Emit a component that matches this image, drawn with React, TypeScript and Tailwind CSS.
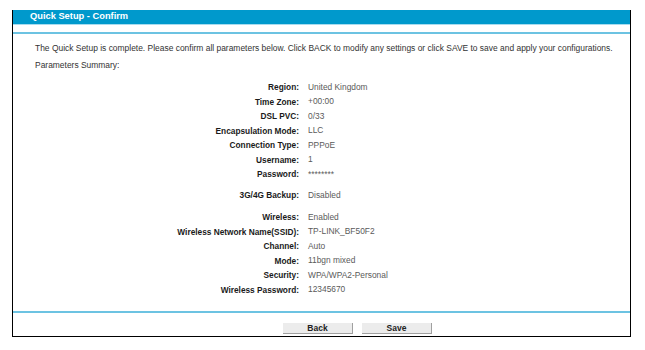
const rows1: [string, string][] = [
  ["Region:", "United Kingdom"],
  ["Time Zone:", "+00:00"],
  ["DSL PVC:", "0/33"],
  ["Encapsulation Mode:", "LLC"],
  ["Connection Type:", "PPPoE"],
  ["Username:", "1"],
  ["Password:", "********"],
];

const rows2: [string, string][] = [
  ["Wireless:", "Enabled"],
  ["Wireless Network Name(SSID):", "TP-LINK_BF50F2"],
  ["Channel:", "Auto"],
  ["Mode:", "11bgn mixed"],
  ["Security:", "WPA/WPA2-Personal"],
  ["Wireless Password:", "12345670"],
];

function Row({ label, value }: { label: string; value: string }) {
  return (
    <div className="flex h-[14.5px] items-center">
      <div className="w-[264px] text-right text-[8.3px] font-bold text-[#1a1a1a]">{label}</div>
      <div className="pl-[9px] text-[8.4px] text-[#5a5a5a]">{value}</div>
    </div>
  );
}

export default function App() {
  return (
    <div className="h-[350px] w-[645px] bg-white pl-[12px] pt-[10px] font-['Liberation_Sans',Arial,sans-serif]">
      <div className="flex h-[327px] w-[619px] flex-col border-x border-b border-black">
        {/* header */}
        <div className="flex h-[14px] items-center bg-[#0099cc] pl-[17px] text-[9.3px] font-bold text-white">
          Quick Setup - Confirm
        </div>
        <div className="h-[1px] bg-[#a8dcef]" />
        <div className="h-[7px]" />
        <div className="h-[2px] bg-[#6cc3e2]" />

        {/* body */}
        <div className="flex h-[277px] flex-col pl-[22px] text-[8.45px] text-[#333]">
          <div className="mt-[8px] h-[12px] whitespace-nowrap leading-[12px]">
            The Quick Setup is complete. Please confirm all parameters below. Click BACK to modify any settings or click SAVE to save and apply your configurations.
          </div>
          <div className="mt-[5px] h-[12px] leading-[12px]">Parameters Summary:</div>
          <div className="mt-[9px] flex flex-col">
            {rows1.map(([l, v]) => (
              <Row key={l} label={l} value={v} />
            ))}
          </div>
          <div className="mt-[6.5px]">
            <Row label="3G/4G Backup:" value="Disabled" />
          </div>
          <div className="mt-[7.5px] flex flex-col">
            {rows2.map(([l, v]) => (
              <Row key={l} label={l} value={v} />
            ))}
          </div>
        </div>

        {/* footer */}
        <div className="h-[2px] bg-[#6cc3e2]" />
        <div className="flex gap-[9px] pl-[270px] pt-[10px]">
          <button className="h-[11px] w-[70px] border-r border-b border-[#a0a0a0] bg-[#ececec] text-[8.5px] font-bold leading-[10px] text-[#222]">
            Back
          </button>
          <button className="h-[11px] w-[70px] border-r border-b border-[#a0a0a0] bg-[#ececec] text-[8.5px] font-bold leading-[10px] text-[#222]">
            Save
          </button>
        </div>
      </div>
    </div>
  );
}
